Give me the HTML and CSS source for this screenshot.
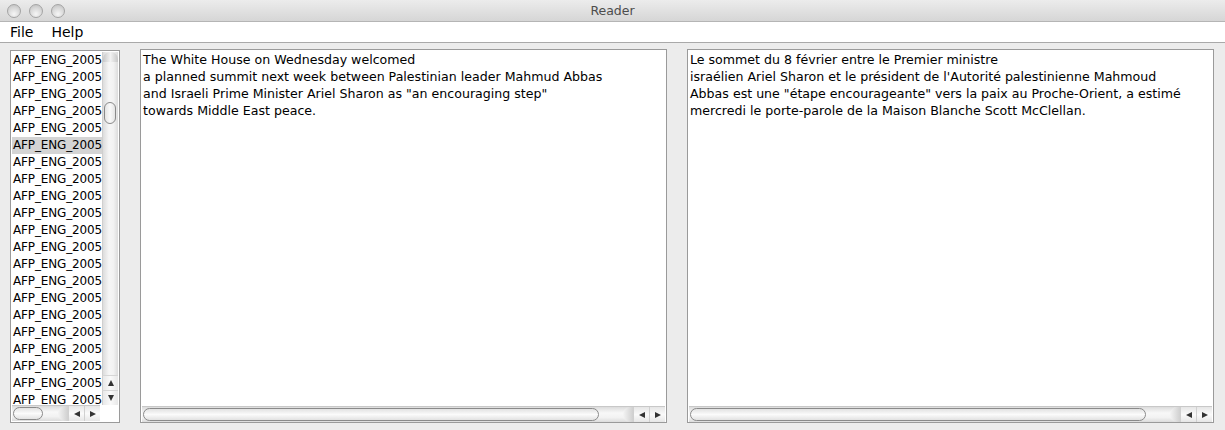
FILE: index.html
```html
<!DOCTYPE html>
<html>
<head>
<meta charset="utf-8">
<title>Reader</title>
<link rel="stylesheet" href="styles.css">
</head>
<body>
<div class="window">
  <div class="titlebar">
    <div class="lights"><span class="light"></span><span class="light"></span><span class="light"></span></div>
    <div class="title">Reader</div>
    <div class="lights-spacer"></div>
  </div>
  <div class="menubar"><span class="menu">File</span><span class="menu">Help</span></div>
  <div class="content">
    <div class="panel list-panel">
      <div class="list-main">
        <ul class="list">
          <li>AFP_ENG_2005</li><li>AFP_ENG_2005</li><li>AFP_ENG_2005</li><li>AFP_ENG_2005</li><li>AFP_ENG_2005</li>
          <li class="selected">AFP_ENG_2005</li><li>AFP_ENG_2005</li><li>AFP_ENG_2005</li><li>AFP_ENG_2005</li><li>AFP_ENG_2005</li>
          <li>AFP_ENG_2005</li><li>AFP_ENG_2005</li><li>AFP_ENG_2005</li><li>AFP_ENG_2005</li><li>AFP_ENG_2005</li>
          <li>AFP_ENG_2005</li><li>AFP_ENG_2005</li><li>AFP_ENG_2005</li><li>AFP_ENG_2005</li><li>AFP_ENG_2005</li>
          <li>AFP_ENG_2005</li>
        </ul>
        <div class="vscroll">
          <div class="vtrack">
            <div class="vcap"></div>
            <div class="vthumb"></div>
          </div>
          <div class="varrow"><span class="tri tri-up"></span></div>
          <div class="varrow"><span class="tri tri-down"></span></div>
        </div>
      </div>
      <div class="list-bottom">
        <div class="hscroll small">
          <div class="htrack"><div class="hthumb"></div><div class="hcap"></div></div>
          <div class="harrow"><span class="tri tri-left"></span></div>
          <div class="harrow"><span class="tri tri-right"></span></div>
        </div>
        <div class="corner"></div>
      </div>
    </div>
    <div class="panel text-panel">
      <div class="text">The White House on Wednesday welcomed<br>a planned summit next week between Palestinian leader Mahmud Abbas<br>and Israeli Prime Minister Ariel Sharon as "an encouraging step"<br>towards Middle East peace.</div>
      <div class="hscroll">
        <div class="htrack"><div class="hthumb wide"></div><div class="hcap"></div></div>
        <div class="harrow"><span class="tri tri-left"></span></div>
        <div class="harrow"><span class="tri tri-right"></span></div>
      </div>
    </div>
    <div class="panel text-panel">
      <div class="text">Le sommet du 8 février entre le Premier ministre<br>israélien Ariel Sharon et le président de l'Autorité palestinienne Mahmoud<br>Abbas est une "étape encourageante" vers la paix au Proche-Orient, a estimé<br>mercredi le porte-parole de la Maison Blanche Scott McClellan.</div>
      <div class="hscroll">
        <div class="htrack"><div class="hthumb wide"></div><div class="hcap"></div></div>
        <div class="harrow"><span class="tri tri-left"></span></div>
        <div class="harrow"><span class="tri tri-right"></span></div>
      </div>
    </div>
  </div>
</div>
</body>
</html>
```
FILE: styles.css
```css
html, body {
  margin: 0;
  padding: 0;
}
body {
  width: 1225px;
  height: 430px;
  overflow: hidden;
  font-family: "DejaVu Sans", "Liberation Sans", sans-serif;
  font-size: 12px;
  color: #000;
  background: #ececec;
}
.window {
  display: flex;
  flex-direction: column;
  height: 430px;
}
.titlebar {
  height: 22px;
  box-sizing: border-box;
  display: grid;
  grid-template-columns: 80px 1fr 80px;
  align-items: center;
  background: linear-gradient(#ececec, #d6d6d6);
  border-bottom: 1px solid #b5b5b5;
}
.lights {
  display: flex;
  gap: 8px;
  padding-left: 7px;
}
.light {
  width: 14px;
  height: 14px;
  border-radius: 50%;
  box-sizing: border-box;
  border: 1px solid #a4a4a4;
  background: radial-gradient(circle at 50% 75%, #f6f6f6 0%, #d8d8d8 55%, #bcbcbc 100%);
}
.title {
  text-align: center;
  font-size: 12.5px;
  color: #4d4d4d;
}
.menubar {
  height: 21px;
  box-sizing: border-box;
  background: #fff;
  border-bottom: 1px solid #a9a9a9;
  display: flex;
  align-items: center;
  gap: 18px;
  padding-left: 10px;
  font-size: 14px;
}
.content {
  flex: 1;
  display: flex;
  gap: 20px;
  padding: 6px 11px 7px 10px;
  min-height: 0;
}
.panel {
  box-sizing: border-box;
  border: 1px solid #9a9a9a;
  background: #fff;
  display: flex;
  flex-direction: column;
}
.list-panel {
  width: 110px;
  margin-top: 1px;
  padding: 1px;
}
.text-panel {
  flex: 1;
}
.list-main {
  flex: 1;
  display: flex;
  min-height: 0;
}
.list {
  list-style: none;
  margin: 0;
  padding: 0;
  flex: 1;
  overflow: hidden;
  min-width: 0;
}
.list li {
  height: 17px;
  line-height: 17px;
  padding-left: 1px;
  white-space: nowrap;
  letter-spacing: -0.15px;
}
.list li.selected {
  background: #d4d4d4;
}
.vscroll {
  width: 16px;
  flex: none;
  display: flex;
  flex-direction: column;
}
.vtrack {
  flex: 1;
  position: relative;
  background: linear-gradient(90deg, #dcdcdc, #f6f6f6 40%, #f2f2f2 70%, #dcdcdc);
  border-left: 1px solid #cfcfcf;
}
.vcap {
  height: 10px;
  border-radius: 7px 7px 0 0;
  background: linear-gradient(90deg, #c8c8c8, #f2f2f2 50%, #c8c8c8);
}
.vthumb {
  position: absolute;
  left: 1px;
  top: 50px;
  width: 12px;
  height: 22px;
  box-sizing: border-box;
  border-radius: 6px;
  border: 1px solid #8a8a8a;
  background: linear-gradient(90deg, #e4e4e4, #fafafa 50%, #e4e4e4);
}
.varrow {
  height: 15px;
  box-sizing: border-box;
  border-left: 1px solid #cfcfcf;
  border-top: 1px solid #d6d6d6;
  background: linear-gradient(90deg, #e8e8e8, #fafafa 50%, #e8e8e8);
  display: flex;
  align-items: center;
  justify-content: center;
}
.list-bottom {
  height: 16px;
  display: flex;
}
.corner {
  width: 18px;
  background: #fff;
}
.hscroll {
  height: 16px;
  display: flex;
  flex: 1;
  border-top: 1px solid #c8c8c8;
  box-sizing: border-box;
}
.text-panel .hscroll {
  flex: none;
  margin: 0 1px 0 1px;
}
.htrack {
  flex: 1;
  position: relative;
  background: linear-gradient(#dcdcdc, #f8f8f8 40%, #f2f2f2 70%, #dcdcdc);
  display: flex;
}
.hthumb {
  width: 30px;
  margin: 1px 0 1px 1px;
  box-sizing: border-box;
  border: 1px solid #8a8a8a;
  border-radius: 7px;
  background: linear-gradient(#e2e2e2, #fbfbfb 50%, #e2e2e2);
}
.hthumb.wide {
  width: 456px;
}
.hcap {
  margin-left: auto;
  width: 10px;
  background: linear-gradient(90deg, #f4f4f4, #d0d0d0);
  border-top-left-radius: 7px;
  border-bottom-left-radius: 7px;
}
.harrow {
  width: 16px;
  box-sizing: border-box;
  border-left: 1px solid #d0d0d0;
  background: linear-gradient(#e6e6e6, #fafafa 50%, #e6e6e6);
  display: flex;
  align-items: center;
  justify-content: center;
}
.tri {
  width: 0;
  height: 0;
  border-style: solid;
}
.tri-up {
  border-width: 0 3.5px 6px 3.5px;
  border-color: transparent transparent #333 transparent;
}
.tri-down {
  border-width: 6px 3.5px 0 3.5px;
  border-color: #333 transparent transparent transparent;
}
.tri-left {
  border-width: 3.5px 6px 3.5px 0;
  border-color: transparent #333 transparent transparent;
}
.tri-right {
  border-width: 3.5px 0 3.5px 6px;
  border-color: transparent transparent transparent #333;
}
.text {
  flex: 1;
  padding: 1px 2px;
  font-size: 12.6px;
  line-height: 17px;
  white-space: nowrap;
  overflow: hidden;
}
```
